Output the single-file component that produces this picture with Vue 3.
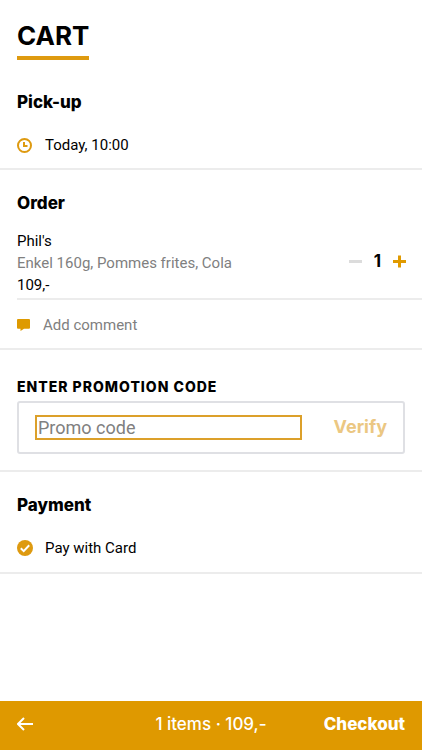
<script setup>
import { ref } from 'vue'

const quantity = ref(1)
const promo = ref('')
const method = ref('card')
</script>

<template>
  <div class="page">
    <header class="top">
      <h1 class="title">CART</h1>
    </header>

    <main>
      <section class="section pickup">
        <h2 class="heading">Pick-up</h2>
        <button class="row" type="button">
          <svg class="clock" viewBox="0 0 15 15" aria-hidden="true">
            <circle cx="7.5" cy="7.5" r="6.5" />
            <path d="M7 4v4h3.500" />
          </svg>
          <span>Today, 10:00</span>
        </button>
      </section>

      <section class="section order">
        <h2 class="heading">Order</h2>
        <div class="item">
          <div class="details">
            <p class="name">Phil's</p>
            <p class="options">Enkel 160g, Pommes frites, Cola</p>
            <p class="price">109,-</p>
          </div>
          <div class="stepper">
            <button class="step" type="button" aria-label="Remove one" disabled>
              <svg viewBox="0 0 13 13" aria-hidden="true"><path d="M0 6.5h13" /></svg>
            </button>
            <span class="quantity">{{ quantity }}</span>
            <button class="step" type="button" aria-label="Add one" @click="quantity++">
              <svg viewBox="0 0 13 13" aria-hidden="true"><path d="M0 6.5h13M6.5 0.5v12" /></svg>
            </button>
          </div>
        </div>
        <button class="row comment" type="button">
          <svg class="bubble" viewBox="0 0 13 12" aria-hidden="true">
            <path d="M1 0h11a1 1 0 0 1 1 1v7.700a1 1 0 0 1-1 1H7L3.500 12V9.700H1a1 1 0 0 1-1-1V1a1 1 0 0 1 1-1z" />
          </svg>
          <span>Add comment</span>
        </button>
      </section>

      <form class="section promotion" @submit.prevent>
        <label class="caption" for="promo">ENTER PROMOTION CODE</label>
        <div class="field">
          <input id="promo" v-model="promo" class="code" type="text" placeholder="Promo code" />
          <button class="verify" type="submit" :disabled="!promo">Verify</button>
        </div>
      </form>

      <section class="section payment">
        <h2 class="heading">Payment</h2>
        <label class="row method">
          <span class="choice">
            <input v-model="method" class="radio" type="radio" name="method" value="card" />
            <svg class="check" viewBox="0 0 16 16" aria-hidden="true"><path d="M3.800 8.200l2.900 2.900 5.500-5.800" /></svg>
          </span>
          <span>Pay with Card</span>
        </label>
      </section>
    </main>

    <footer class="bar">
      <button class="back" type="button" aria-label="Back">
        <svg viewBox="0 0 16 14" aria-hidden="true"><path d="M7 1L1 7l6 6M1 7h15" /></svg>
      </button>
      <span class="summary">{{ quantity }} items · 109,-</span>
      <button class="checkout" type="button">Checkout</button>
    </footer>
  </div>
</template>

<style>
body {
  margin: 0;
  background: #fff;
}
</style>

<style scoped>
.page {
  display: flex;
  flex-direction: column;
  min-height: 100vh;
  color: #000;
  font-family: Inter, "Liberation Sans", sans-serif;
  font-size: 15px;
  line-height: 22px;
}

h1,
h2,
p {
  margin: 0;
}

button {
  padding: 0;
  border: 0;
  background: none;
  color: inherit;
  font: inherit;
  cursor: pointer;
}

svg {
  display: block;
  fill: none;
}

.top {
  display: flex;
  padding: 20px 17px 0;
}

.title {
  padding-bottom: 4px;
  border-bottom: 4px solid #de9a10;
  font-size: 26px;
  font-weight: 700;
  line-height: 32px;
}

.section {
  padding: 0 17px;
  border-bottom: 2px solid #ececec;
}

.heading {
  font-size: 17px;
  font-weight: 800;
  line-height: 24px;
}

.row {
  display: flex;
  align-items: center;
  width: 100%;
  text-align: left;
}

.row,
.details {
  font-family: Roboto, "Liberation Sans", sans-serif;
  font-size: 15px;
}

.pickup {
  padding-top: 30px;
  padding-bottom: 12px;
}

.pickup .row {
  gap: 13px;
  margin-top: 20px;
}

.clock {
  width: 15px;
  height: 15px;
  stroke: #de9a10;
  stroke-width: 2;
}

.order {
  padding-top: 21px;
  padding-right: 0;
}

.item {
  display: flex;
  justify-content: space-between;
  align-items: center;
  margin-top: 15px;
  padding-right: 16px;
  padding-bottom: 2px;
  border-bottom: 2px solid #ececec;
}

.options,
.comment {
  color: #808080;
}

.stepper {
  display: flex;
  align-items: center;
  gap: 12px;
  padding-bottom: 4px;
}

.step svg {
  width: 13px;
  height: 13px;
  stroke: #e09a00;
  stroke-width: 3;
}

.step:disabled svg {
  stroke: #dcdcdc;
}

.quantity {
  font-size: 17px;
  font-weight: 700;
}

.comment {
  gap: 13px;
  padding: 14px 0 12px;
}

.bubble {
  width: 13px;
  height: 12px;
  fill: #de9a00;
}

.promotion {
  padding-top: 26px;
  padding-bottom: 16px;
}

.caption {
  display: block;
  font-size: 14px;
  font-weight: 800;
  letter-spacing: 1px;
}

.field {
  display: flex;
  align-items: center;
  justify-content: space-between;
  gap: 32px;
  margin-top: 3px;
  padding: 12px 16px;
  border: 2px solid #dfe0e4;
  border-radius: 3px;
}

.code {
  flex: 1;
  min-width: 0;
  box-sizing: border-box;
  height: 25px;
  padding: 0 1px;
  border: 2px solid #dca02a;
  border-radius: 0;
  outline: 0;
  background: #fff;
  font-family: Roboto, "Liberation Sans", sans-serif;
  font-size: 18px;
}

.code::placeholder {
  color: #808080;
  opacity: 1;
}

.verify {
  padding-bottom: 2px;
  font-size: 18px;
  font-weight: 700;
  color: #ebc782;
}

.payment {
  padding-top: 21px;
  padding-bottom: 13px;
}

.method {
  gap: 12px;
  margin-top: 20px;
}

.choice {
  display: grid;
}

.radio,
.check {
  grid-area: 1 / 1;
  width: 16px;
  height: 16px;
}

.radio {
  appearance: none;
  margin: 0;
  border-radius: 50%;
  background: #de9a10;
}

.check {
  stroke: #fff;
  stroke-width: 2;
  pointer-events: none;
}

.bar {
  display: grid;
  grid-template-columns: 1fr auto 1fr;
  align-items: center;
  box-sizing: border-box;
  height: 49px;
  margin-top: auto;
  padding: 0 17px 3px;
  background: #df9900;
  color: #fff;
  font-size: 17px;
}

.back {
  justify-self: start;
}

.back svg {
  width: 16px;
  height: 14px;
  stroke: #fff;
  stroke-width: 2;
}

.summary {
  font-weight: 500;
}

.checkout {
  justify-self: end;
  font-size: 17px;
  font-weight: 800;
}
</style>
